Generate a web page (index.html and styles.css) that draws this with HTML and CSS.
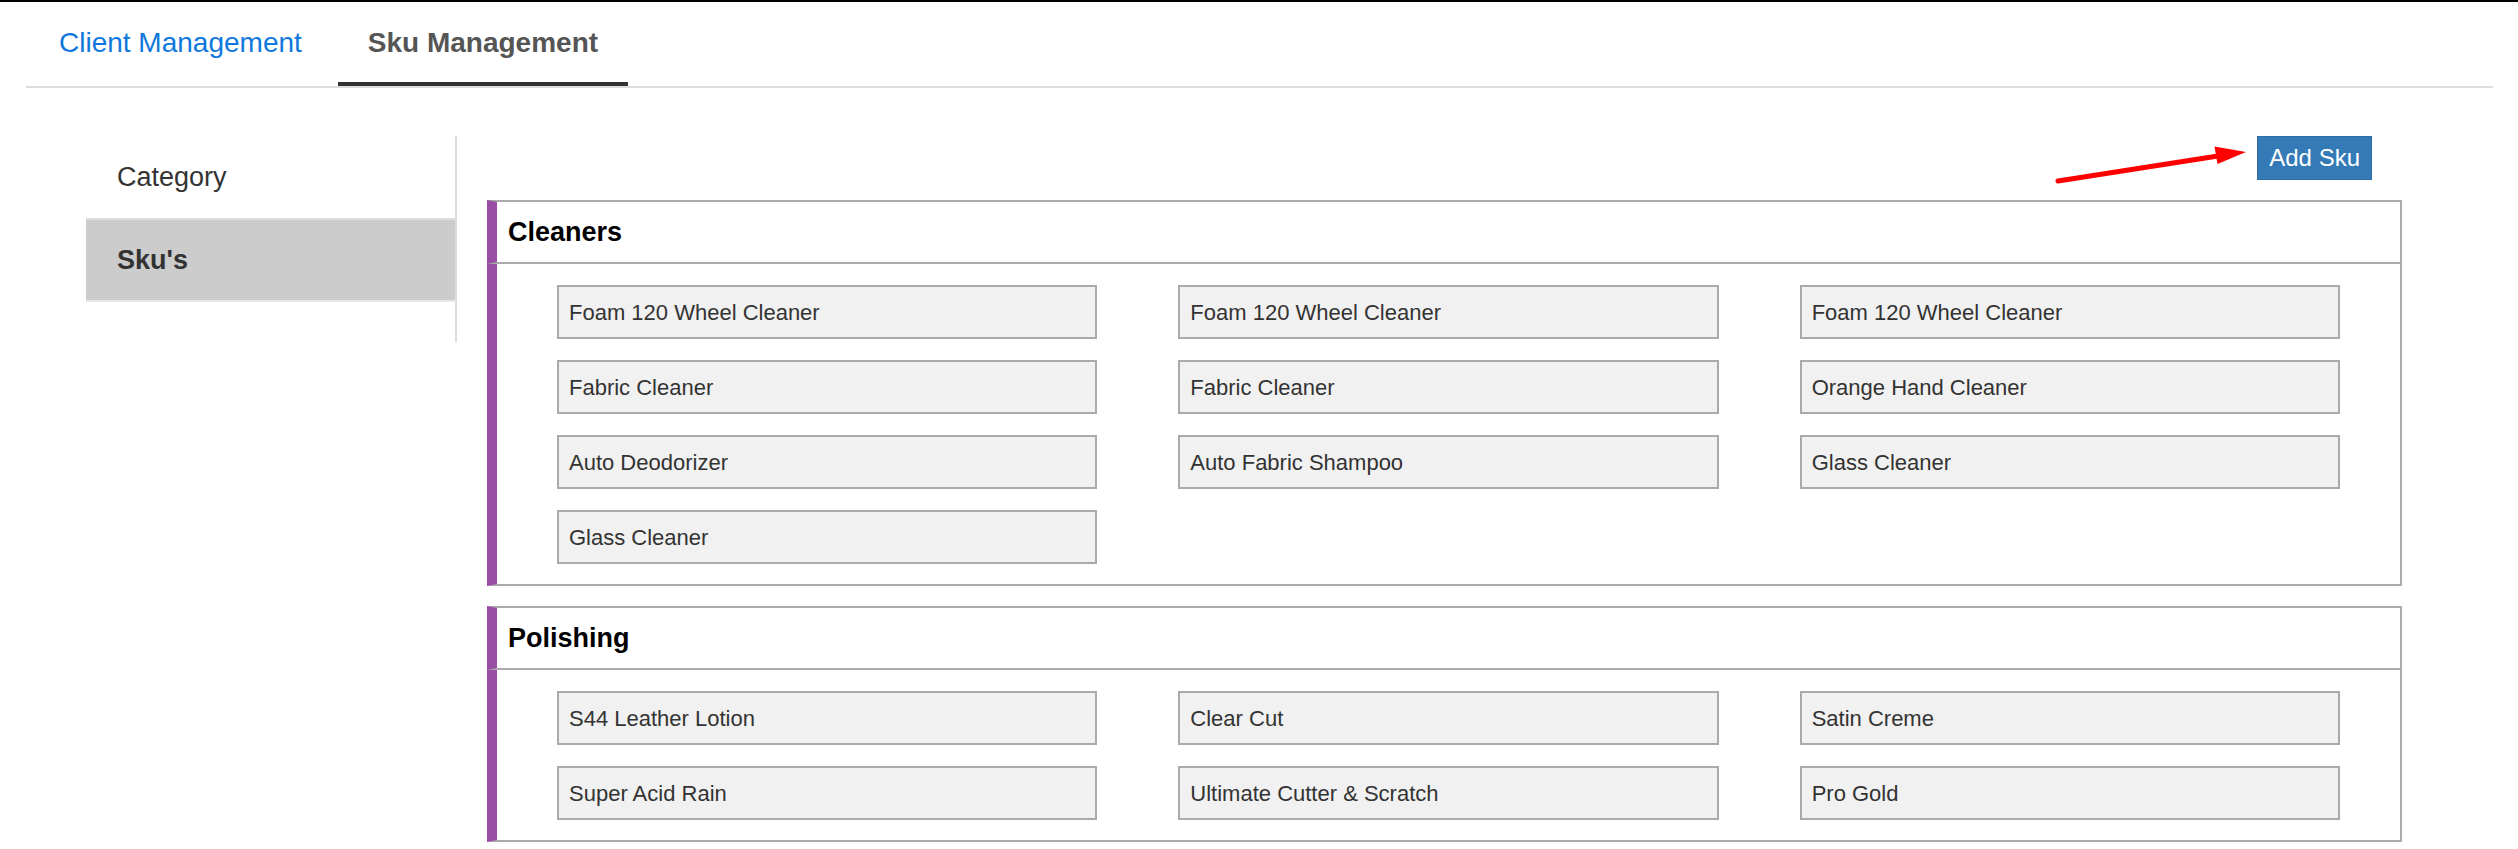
FILE: index.html
```html
<!DOCTYPE html>
<html>
<head>
<meta charset="utf-8">
<title>Sku Management</title>
<link rel="stylesheet" href="styles.css">
</head>
<body>
<div class="page">
  <nav class="tabs">
    <a class="tab tab-link">Client Management</a>
    <a class="tab tab-active">Sku Management</a>
  </nav>
  <div class="main">
    <aside class="sidebar">
      <div class="side-item">Category</div>
      <div class="side-item side-active">Sku's</div>
    </aside>
    <section class="content">
      <div class="toolbar">
        <button class="btn-add">Add Sku
          <svg class="arrow" width="200" height="48" viewBox="0 0 200 48">
            <line x1="5" y1="40" x2="165" y2="15" stroke="#ff0000" stroke-width="5" stroke-linecap="round"/>
            <polygon points="161.5,5.5 164.5,23 193,11" fill="#ff0000"/>
          </svg>
        </button>
      </div>
      <div class="card">
        <div class="card-head">Cleaners</div>
        <div class="card-body">
          <div class="sku">Foam 120 Wheel Cleaner</div>
          <div class="sku">Foam 120 Wheel Cleaner</div>
          <div class="sku">Foam 120 Wheel Cleaner</div>
          <div class="sku">Fabric Cleaner</div>
          <div class="sku">Fabric Cleaner</div>
          <div class="sku">Orange Hand Cleaner</div>
          <div class="sku">Auto Deodorizer</div>
          <div class="sku">Auto Fabric Shampoo</div>
          <div class="sku">Glass Cleaner</div>
          <div class="sku">Glass Cleaner</div>
        </div>
      </div>
      <div class="card">
        <div class="card-head">Polishing</div>
        <div class="card-body">
          <div class="sku">S44 Leather Lotion</div>
          <div class="sku">Clear Cut</div>
          <div class="sku">Satin Creme</div>
          <div class="sku">Super Acid Rain</div>
          <div class="sku">Ultimate Cutter &amp; Scratch</div>
          <div class="sku">Pro Gold</div>
        </div>
      </div>
    </section>
  </div>
</div>
</body>
</html>
```
FILE: styles.css
```css
* { box-sizing: border-box; }
html, body { margin: 0; padding: 0; background: #fff; }
body {
  border-top: 2px solid #000;
  font-family: "Liberation Sans", Arial, Helvetica, sans-serif;
  color: #333;
  overflow: hidden;
}
.page { margin: 0 25px 0 26px; }

.tabs {
  display: flex;
  gap: 6px;
  padding-left: 3px;
  border-bottom: 2px solid #dddddd;
}
.tab {
  display: block;
  font-size: 28px;
  line-height: 32px;
  padding: 25px 30px 23px;
  border-bottom: 4px solid transparent;
  text-decoration: none;
}
.tab-link { color: #1078dc; }
.tab-active { color: #555; font-weight: bold; border-bottom-color: #333; }

.main {
  display: flex;
  margin-top: 48px;
}
.sidebar {
  flex: 0 0 371px;
  width: 371px;
  margin-left: 60px;
  padding-bottom: 40px;
  border-right: 2px solid #dddddd;
  align-self: flex-start;
}
.side-item {
  height: 82px;
  display: flex;
  align-items: center;
  padding-left: 31px;
  font-size: 27px;
  color: #333;
}
.side-active {
  height: 84px;
  background: #cccccc;
  border-top: 2px solid #dedede;
  border-bottom: 2px solid #e8e8e8;
  font-weight: bold;
}

.content {
  flex: 1;
  padding-left: 30px;
  padding-right: 91px;
}
.toolbar {
  display: flex;
  justify-content: flex-end;
  padding-right: 30px;
  margin-bottom: 20px;
}
.btn-add {
  position: relative;
  height: 44px;
  padding: 0 11px;
  background: #337ab7;
  border: 1px solid #2e6da4;
  color: #fff;
  font-family: "Liberation Sans", Arial, Helvetica, sans-serif;
  font-size: 24px;
  line-height: 1;
  border-radius: 0;
}
.arrow {
  position: absolute;
  left: -205px;
  top: 4px;
  overflow: visible;
}

.card {
  border-right: 2px solid #aaaaaa;
  margin-bottom: 20px;
}
.card-head {
  height: 64px;
  border-top: 2px solid #aaaaaa;
  border-bottom: 2px solid #aaaaaa;
  border-left: 10px solid #984ea3;
  padding-left: 11px;
  display: flex;
  align-items: center;
  font-size: 27px;
  font-weight: bold;
  color: #000;
}
.card-body {
  border-left: 10px solid #984ea3;
  border-bottom: 2px solid #aaaaaa;
  padding: 21px 60px 20px;
  display: grid;
  grid-template-columns: repeat(3, 1fr);
  column-gap: 81px;
  row-gap: 21px;
}
.sku {
  height: 54px;
  border: 2px solid #aaaaaa;
  background: #f1f1f1;
  padding: 1px 0 0 10px;
  display: flex;
  align-items: center;
  font-size: 22px;
  color: #333;
}
```
